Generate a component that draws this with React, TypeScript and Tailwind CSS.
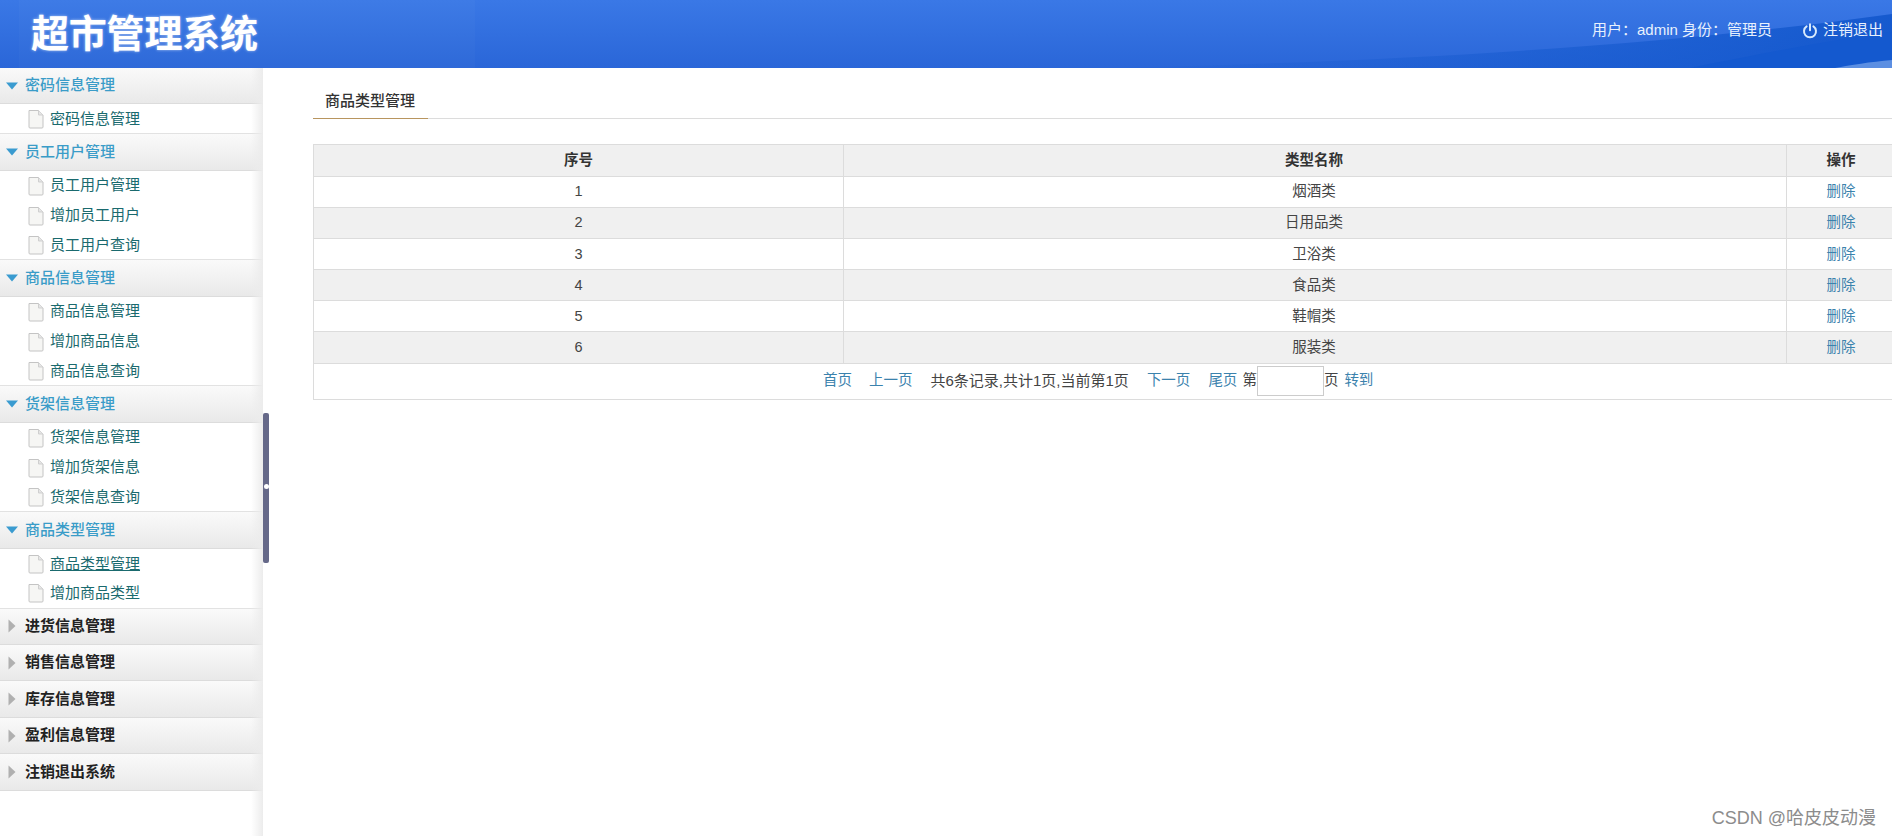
const menu = [
  { title: "密码信息管理", items: ["密码信息管理"] },
  { title: "员工用户管理", items: ["员工用户管理", "增加员工用户", "员工用户查询"] },
  { title: "商品信息管理", items: ["商品信息管理", "增加商品信息", "商品信息查询"] },
  { title: "货架信息管理", items: ["货架信息管理", "增加货架信息", "货架信息查询"] },
  { title: "商品类型管理", items: ["商品类型管理", "增加商品类型"] },
  { title: "进货信息管理", items: [] },
  { title: "销售信息管理", items: [] },
  { title: "库存信息管理", items: [] },
  { title: "盈利信息管理", items: [] },
  { title: "注销退出系统", items: [] },
];

const rows = ["烟酒类", "日用品类", "卫浴类", "食品类", "鞋帽类", "服装类"];

const PageIcon = () => (
  <svg width="16" height="20" viewBox="0 0 16 20" className="shrink-0">
    <path d="M1 1.5 H10.5 L15 6 V18 Q15 19 14 19 H2 Q1 19 1 18 Z" fill="#f6f6f4" stroke="#c4c4c4" strokeWidth="1" />
    <path d="M10.5 1.5 V6 H15" fill="#e6e6e6" stroke="#cfcfcf" strokeWidth="1" />
  </svg>
);

const ArrowDown = () => (
  <svg width="14" height="8" viewBox="0 0 14 8" className="shrink-0">
    <path d="M1 0.5 H13 L7 7.5 Z" fill="#3a9bd0" />
  </svg>
);

const ArrowRight = () => (
  <svg width="8" height="14" viewBox="0 0 8 14" className="shrink-0">
    <path d="M0.5 0.5 L7.5 7 L0.5 13.5 Z" fill="#b0b0b0" />
  </svg>
);

const PowerIcon = () => (
  <svg width="16" height="16" viewBox="0 0 16 16" fill="none" stroke="#d8eafc" strokeWidth="2" strokeLinecap="round" className="shrink-0">
    <path d="M4.6 3.4 A6 6 0 1 0 11.4 3.4" />
    <path d="M8 1.2 V7.2" />
  </svg>
);

const Header = () => (
  <header className="relative h-[68px] shrink-0 flex items-center justify-between overflow-hidden bg-gradient-to-b from-[#3a78e6] to-[#2a66d8] text-white">
    <svg viewBox="0 0 1892 68" className="absolute inset-0 w-full h-full">
      <defs>
        <linearGradient id="dark" x1="0" y1="0" x2="1" y2="0">
          <stop offset="0" stopColor="#1257cc" stopOpacity="0" />
          <stop offset="1" stopColor="#1257cc" stopOpacity="0.9" />
        </linearGradient>
      </defs>
      <path d="M1100 68 C1400 62 1660 46 1892 14 V68 Z" fill="url(#dark)" />
      <path d="M1690 68 C1760 54 1830 40 1892 32 V60 C1870 62 1850 65 1835 68 Z" fill="#1459cf" />
      <path d="M1835 68 C1850 65 1870 62 1892 60 V68 Z" fill="#5c8fe2" />
    </svg>
    <div className="relative h-full w-[456px] ml-[19px] pl-3 flex items-center bg-white/[.025]">
      <span className="text-[38px] leading-none font-bold tracking-[-0.2px] [text-shadow:0_0_3px_rgba(255,255,255,0.6)]">超市管理系统</span>
    </div>
    <div className="relative flex items-center pr-[9px] pb-[7px] text-[15px] text-[#e8f1fd]">
      <span>用户：admin 身份：管理员</span>
      <span className="ml-[30px] flex items-center gap-[5px]">
        <PowerIcon />
        注销退出
      </span>
    </div>
  </header>
);

const Sidebar = () => (
  <aside className="relative w-[263px] shrink-0 bg-white">
    {menu.map((group) => {
      const open = group.items.length > 0;
      return (
        <div key={group.title}>
          <div className="h-[36.4px] flex items-center bg-gradient-to-b from-[#fafafa] to-[#e9e9e9] border-b border-[#dcdcdc] text-[15px]">
            <span className="w-[25px] flex justify-center pr-[2px]">
              {open ? <ArrowDown /> : <ArrowRight />}
            </span>
            <span className={open ? "text-[#3a9cc8] font-medium" : "text-[#222] font-bold"}>{group.title}</span>
          </div>
          {group.items.map((item, i) => (
            <div
              key={item}
              className={`h-[29.9px] flex items-center pl-[28px] gap-[6px] text-[15px] text-[#1a6a6e] ${
                i === group.items.length - 1 ? "border-b border-[#e2e2e2]" : ""
              }`}
            >
              <PageIcon />
              <span className={item === "商品类型管理" ? "underline" : ""}>{item}</span>
            </div>
          ))}
        </div>
      );
    })}
    {/* shadow on the right edge of the menu */}
    <div className="absolute inset-y-0 right-0 w-3 bg-gradient-to-r from-transparent to-[#ececec] pointer-events-none" />
    {/* collapse handle */}
    <div className="absolute top-[345px] -right-[6px] w-[6px] h-[150px] rounded-[2px] bg-[#666989]">
      <span className="absolute top-[71px] left-[1px] w-[5px] h-[5px] rounded-full bg-white" />
    </div>
  </aside>
);

const Main = () => (
  <main className="flex-1 min-w-0 overflow-hidden pl-[50px] text-[14.5px] text-[#444]">
    <div className="mt-4 flex border-b border-[#dcdcdc] h-[35px]">
      <div className="w-[115px] h-[35px] border-b border-[#b8955f] pl-3 flex items-center text-[15px] font-medium text-[#333]">
        商品类型管理
      </div>
    </div>
    <div className="w-[1590px] mt-[25px] border-l border-t border-[#dcdcdc]">
      <div className="h-[31.5px] grid grid-cols-[530px_943px_108px] bg-[#f0f0f0] border-b border-[#dcdcdc] font-bold text-[#333]">
        <div className="pt-[2px] flex items-center justify-center border-r border-[#dcdcdc]">序号</div>
        <div className="pt-[2px] flex items-center justify-center border-r border-[#dcdcdc] pr-[2px]">类型名称</div>
        <div className="pt-[2px] flex items-center justify-center">操作</div>
      </div>
      {rows.map((name, i) => (
        <div
          key={name}
          className={`h-[31.2px] grid grid-cols-[530px_943px_108px] border-b border-[#dcdcdc] ${i % 2 === 1 ? "bg-[#f0f0f0]" : "bg-white"}`}
        >
          <div className="pt-[1px] flex items-center justify-center border-r border-[#dcdcdc]">{i + 1}</div>
          <div className="pt-[1px] flex items-center justify-center border-r border-[#dcdcdc] pr-[2px]">{name}</div>
          <div className="pt-[1px] flex items-center justify-center text-[#3b82ad]">删除</div>
        </div>
      ))}
      <div className="h-[36px] pl-[509px] flex items-center border-b border-[#dcdcdc] whitespace-nowrap">
        <span className="text-[#3b82ad]">首页</span>
        <span className="ml-[17px] text-[#3b82ad]">上一页</span>
        <span className="ml-[18px] text-[15px]">共6条记录,共计1页,当前第1页</span>
        <span className="ml-[18px] text-[#3b82ad]">下一页</span>
        <span className="ml-[18px] text-[#3b82ad]">尾页</span>
        <span className="ml-[5px]">第</span>
        <input className="w-[67px] h-[30px] border border-[#ccc] bg-white" />
        <span>页</span>
        <span className="ml-[6px] text-[#3b82ad]">转到</span>
      </div>
    </div>
  </main>
);

export default function App() {
  return (
    <div className="relative h-screen flex flex-col overflow-hidden bg-white font-['Liberation_Sans','Noto_Sans_CJK_SC',sans-serif]">
      <Header />
      <div className="flex flex-1 min-h-0">
        <Sidebar />
        <Main />
      </div>
      <span className="absolute right-[16px] bottom-[9px] text-[18px] leading-none text-[#8c8c8c]">CSDN @哈皮皮动漫</span>
    </div>
  );
}
